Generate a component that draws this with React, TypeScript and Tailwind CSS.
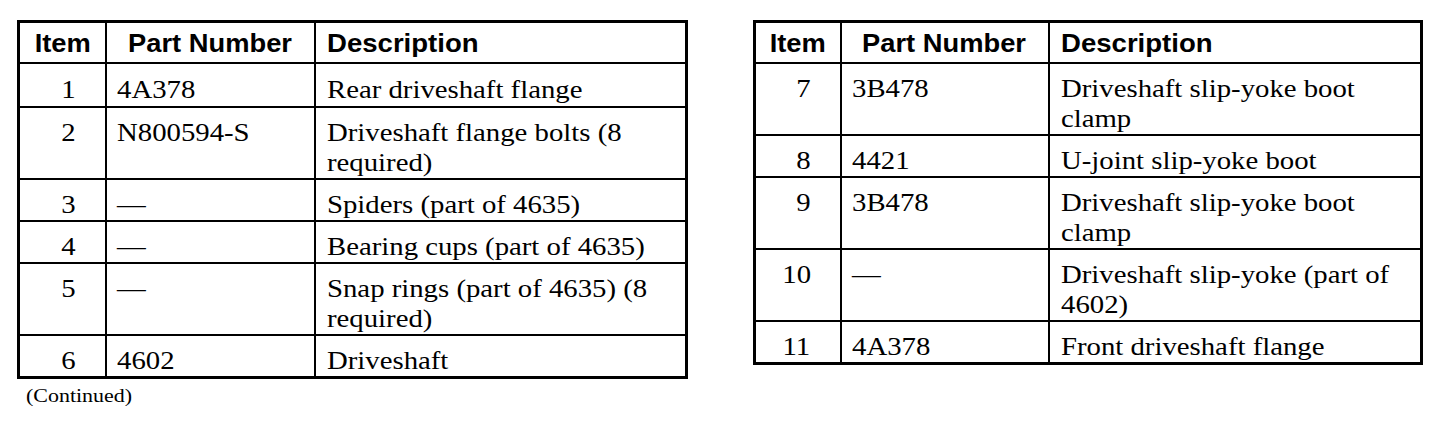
const left = [
  { item: "1", part: "4A378", desc: ["Rear driveshaft flange"] },
  { item: "2", part: "N800594-S", desc: ["Driveshaft flange bolts (8", "required)"] },
  { item: "3", part: "—", desc: ["Spiders (part of 4635)"] },
  { item: "4", part: "—", desc: ["Bearing cups (part of 4635)"] },
  { item: "5", part: "—", desc: ["Snap rings (part of 4635) (8", "required)"] },
  { item: "6", part: "4602", desc: ["Driveshaft"] },
];

const right = [
  { item: "7", part: "3B478", desc: ["Driveshaft slip-yoke boot", "clamp"] },
  { item: "8", part: "4421", desc: ["U-joint slip-yoke boot"] },
  { item: "9", part: "3B478", desc: ["Driveshaft slip-yoke boot", "clamp"] },
  { item: "10", part: "—", desc: ["Driveshaft slip-yoke (part of", "4602)"] },
  { item: "11", part: "4A378", desc: ["Front driveshaft flange"] },
];

type Row = { item: string; part: string; desc: string[] };

function Serif({ lines, right }: { lines: string[]; right?: boolean }) {
  return (
    <span
      className={`inline-block whitespace-nowrap scale-x-[1.15] ${right ? "origin-right" : "origin-left"}`}
    >
      {lines.map((l, i) => (
        <span key={i} className="block">
          {l}
        </span>
      ))}
    </span>
  );
}

function PartsTable({ rows, widths }: { rows: Row[]; widths: [string, string, string] }) {
  return (
    <table className="border-collapse border-[3px] border-black table-fixed">
      <colgroup>
        <col className={widths[0]} />
        <col className={widths[1]} />
        <col className={widths[2]} />
      </colgroup>
      <thead>
        <tr className="font-['Liberation_Sans',Arial,sans-serif] font-bold text-[26px] leading-[30px]">
          <th className="border-2 border-black pt-[5px] pb-[4px] text-center">
            <span className="inline-block scale-x-[1.05]">Item</span>
          </th>
          <th className="border-2 border-black pt-[5px] pb-[4px] text-center">
            <span className="inline-block scale-x-[1.05]">Part Number</span>
          </th>
          <th className="border-2 border-black pt-[5px] pb-[4px] pl-[11px] text-left">
            <span className="inline-block origin-left scale-x-[1.06]">Description</span>
          </th>
        </tr>
      </thead>
      <tbody className="font-['Liberation_Serif','Times_New_Roman',serif] text-[25px] leading-[30px]">
        {rows.map((r, i) => {
          const pad = i === 0 && r.item === "1" ? "pt-[11px] pb-[1px]" : "pt-[10px]";
          return (
            <tr key={r.item}>
              <td className={`border-2 border-black align-top pr-[29px] text-right ${pad}`}>
                <Serif lines={[r.item]} right />
              </td>
              <td className={`border-2 border-black align-top pl-[10px] ${pad}`}>
                <Serif lines={[r.part]} />
              </td>
              <td className={`border-2 border-black align-top pl-[11px] ${pad}`}>
                <Serif lines={r.desc} />
              </td>
            </tr>
          );
        })}
      </tbody>
    </table>
  );
}

export default function App() {
  return (
    <div className="w-[1456px] h-[422px] bg-white text-black pt-[20px] pl-[17px] flex gap-[65px] items-start">
      <div className="flex flex-col">
        <PartsTable rows={left} widths={["w-[87px]", "w-[209px]", "w-[372px]"]} />
        <div className="pl-[9px] pt-[5px] font-['Liberation_Serif','Times_New_Roman',serif] text-[18px] leading-[24px]">
          <span className="inline-block origin-left scale-x-[1.22]">(Continued)</span>
        </div>
      </div>
      <PartsTable rows={right} widths={["w-[86px]", "w-[208px]", "w-[373px]"]} />
    </div>
  );
}
